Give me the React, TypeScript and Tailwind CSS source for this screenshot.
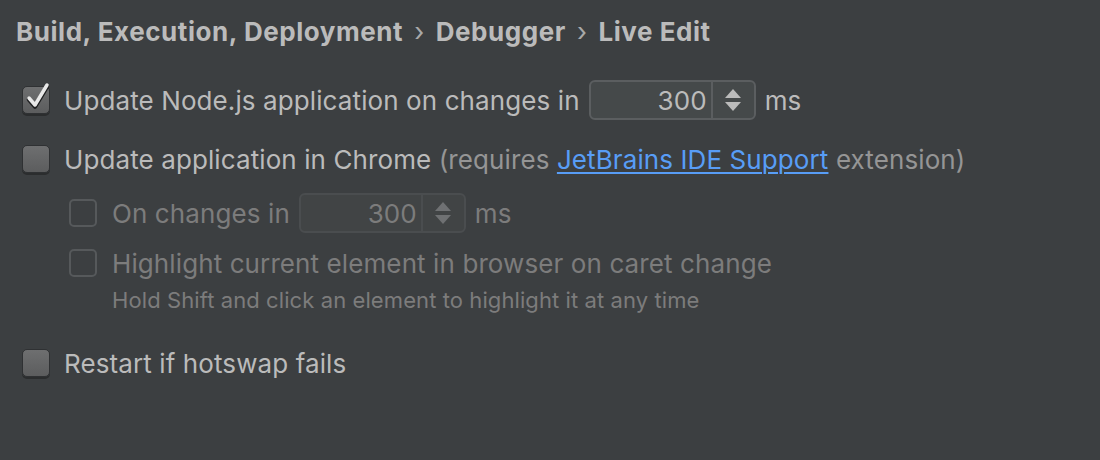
import React from 'react';

const font = { fontFamily: 'Inter, "Liberation Sans", sans-serif' };

const Checkbox: React.FC<{ checked?: boolean; disabled?: boolean }> = ({ checked, disabled }) => {
    if (disabled) {
        return <div className="w-[28px] h-[28px] shrink-0 rounded-[5px] border-2 border-[#56595b]" />;
    }
    return (
        <div className="relative w-[28px] h-[28px] shrink-0 rounded-[5px] bg-gradient-to-b from-[#6e6f70] to-[#5c5d5e] border border-[#2f3133] shadow-[0_2px_0_#2b2d2e]">
            {checked && (
                <svg className="absolute left-[2px] top-[-6px] overflow-visible" width="26" height="30" viewBox="0 0 26 30">
                    <path d="M4 17 L10 24 L22 4" fill="none" stroke="#1e1f20" strokeWidth="4.5" strokeLinecap="round" strokeLinejoin="round" transform="translate(0 1.5)" />
                    <path d="M4 17 L10 24 L22 4" fill="none" stroke="#e8e8e8" strokeWidth="3.5" strokeLinecap="round" strokeLinejoin="round" />
                </svg>
            )}
        </div>
    );
};

const Spinner: React.FC<{ value: string; disabled?: boolean }> = ({ value, disabled }) => {
    const arrow = disabled ? '#6f7173' : '#bbbbbb';
    return (
        <div className={`flex h-[40px] w-[167px] rounded-[6px] border-2 ${disabled ? 'border-[#4a4d4f] bg-[#414445]' : 'border-[#5b5e60] bg-[#45494a]'}`}>
            <div className={`flex-1 flex items-center justify-end pr-[4px] text-[26px] ${disabled ? 'text-[#7c7c7c]' : 'text-[#bbbbbb]'}`}>{value}</div>
            <div className={`w-[43px] flex items-center justify-center border-l-2 ${disabled ? 'border-[#4a4d4f]' : 'border-[#5b5e60]'}`}>
                <svg width="18" height="28" viewBox="0 0 18 28">
                    <path d="M9 3 L17 12 L1 12 Z" fill={arrow} />
                    <path d="M1 16 L17 16 L9 25 Z" fill={arrow} />
                </svg>
            </div>
        </div>
    );
};

export default function App() {
    return (
        <div className="w-[1100px] h-[460px] bg-[#3c3f41] pl-[16px] overflow-hidden" style={font}>
            <div className="h-[63px] flex items-center text-[26px] font-bold text-[#bbbbbb] tracking-[0.55px]">
                Build, Execution, Deployment
                <span className="mx-[11px] font-normal text-[#a9a9a9]">›</span>
                Debugger
                <span className="mx-[11px] font-normal text-[#a9a9a9]">›</span>
                Live Edit
            </div>

            <div className="mt-[17px] h-[40px] flex items-center text-[26px] text-[#bbbbbb] tracking-[0.1px]">
                <div className="ml-[6px] mr-[14px]"><Checkbox checked /></div>
                <span className="mr-[9px]">Update Node.js application on changes in</span>
                <Spinner value="300" />
                <span className="ml-[9px]">ms</span>
            </div>

            <div className="mt-[19px] h-[40px] flex items-center text-[26px] text-[#bbbbbb] whitespace-pre tracking-[0.1px]">
                <div className="ml-[6px] mr-[14px]"><Checkbox /></div>
                <span>Update application in Chrome </span>
                <span className="text-[#959595]">(requires </span>
                <span className="text-[#589df6] underline underline-offset-[3px] decoration-[2px]">JetBrains IDE Support</span>
                <span className="text-[#959595]"> extension)</span>
            </div>

            <div className="mt-[14px] h-[40px] flex items-center text-[26px] text-[#7c7c7c] tracking-[0.1px]">
                <div className="ml-[53px] mr-[15px]"><Checkbox disabled /></div>
                <span className="mr-[9px]">On changes in</span>
                <Spinner value="300" disabled />
                <span className="ml-[9px]">ms</span>
            </div>

            <div className="mt-[10px] h-[40px] flex items-center text-[26px] text-[#7c7c7c] tracking-[0.1px]">
                <div className="ml-[53px] mr-[15px]"><Checkbox disabled /></div>
                <span>Highlight current element in browser on caret change</span>
            </div>

            <div className="mt-[5px] h-[24px] flex items-center pl-[96px] text-[22px] text-[#7c7c7c] tracking-[0.09px]">
                Hold Shift and click an element to highlight it at any time
            </div>

            <div className="mt-[31px] h-[40px] flex items-center text-[26px] text-[#bbbbbb] tracking-[0.1px]">
                <div className="ml-[6px] mr-[14px]"><Checkbox /></div>
                <span>Restart if hotswap fails</span>
            </div>
        </div>
    );
}
